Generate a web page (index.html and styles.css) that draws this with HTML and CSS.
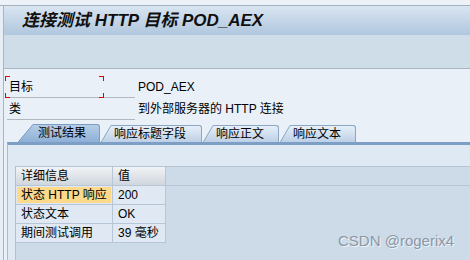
FILE: index.html
```html
<!DOCTYPE html>
<html lang="zh">
<head>
<meta charset="utf-8">
<title>连接测试 HTTP 目标 POD_AEX</title>
<link rel="stylesheet" href="styles.css">
</head>
<body>
<div class="screen">
  <div class="topstrip"></div>
  <div class="main">
    <div class="titlebar"><span class="cjk">连接测试</span> HTTP <span class="cjk">目标</span> POD_AEX</div>
    <div class="toolbar"></div>
    <div class="content">
      <div class="fields">
        <div class="field-row">
          <div class="field-label"><div class="focus">目标</div></div>
          <div class="field-value">POD_AEX</div>
        </div>
        <div class="field-row">
          <div class="field-label"><div class="plain">类</div></div>
          <div class="field-value">到外部服务器的 HTTP 连接</div>
        </div>
      </div>
      <div class="tabs">
        <div class="tab active">
          <svg class="slant" width="15" height="18" viewBox="0 0 15 18">
            <defs><linearGradient id="ga" x1="0" y1="0" x2="0" y2="1"><stop offset="0" stop-color="#b6cde7"/><stop offset="1" stop-color="#8eb0d7"/></linearGradient></defs>
            <polygon points="0,18 15,0 15,18" fill="url(#ga)"/>
            <line x1="0.3" y1="18" x2="15" y2="0.5" stroke="#7b9cc4" stroke-width="1"/>
          </svg>
          <div class="tab-body w1">测试结果</div>
        </div>
        <div class="tab">
          <svg class="slant" width="10" height="17" viewBox="0 0 10 17">
            <defs><linearGradient id="gi2" x1="0" y1="0" x2="0" y2="1"><stop offset="0" stop-color="#e7eff8"/><stop offset="1" stop-color="#bdd0e6"/></linearGradient></defs>
            <polygon points="0,17 10,0 10,17" fill="url(#gi2)"/>
            <line x1="0.3" y1="17" x2="10" y2="0.5" stroke="#8ca7c5" stroke-width="1"/>
          </svg>
          <div class="tab-body w2">响应标题字段</div>
        </div>
        <div class="tab">
          <svg class="slant" width="10" height="17" viewBox="0 0 10 17">
            <defs><linearGradient id="gi3" x1="0" y1="0" x2="0" y2="1"><stop offset="0" stop-color="#e7eff8"/><stop offset="1" stop-color="#bdd0e6"/></linearGradient></defs>
            <polygon points="0,17 10,0 10,17" fill="url(#gi3)"/>
            <line x1="0.3" y1="17" x2="10" y2="0.5" stroke="#8ca7c5" stroke-width="1"/>
          </svg>
          <div class="tab-body w3">响应正文</div>
        </div>
        <div class="tab">
          <svg class="slant" width="10" height="17" viewBox="0 0 10 17">
            <defs><linearGradient id="gi4" x1="0" y1="0" x2="0" y2="1"><stop offset="0" stop-color="#e7eff8"/><stop offset="1" stop-color="#bdd0e6"/></linearGradient></defs>
            <polygon points="0,17 10,0 10,17" fill="url(#gi4)"/>
            <line x1="0.3" y1="17" x2="10" y2="0.5" stroke="#8ca7c5" stroke-width="1"/>
          </svg>
          <div class="tab-body w4">响应文本</div>
        </div>
      </div>
      <div class="panel">
        <div class="panel-top"></div>
        <div class="grid-area">
          <div class="alv">
            <div class="cell head">详细信息</div>
            <div class="cell head">值</div>
            <div class="cell hl">状态 HTTP 响应</div>
            <div class="cell">200</div>
            <div class="cell">状态文本</div>
            <div class="cell">OK</div>
            <div class="cell">期间测试调用</div>
            <div class="cell">39 毫秒</div>
          </div>
        </div>
      </div>
    </div>
  </div>
  <div class="watermark">CSDN @rogerix4</div>
</div>
</body>
</html>
```

FILE: styles.css
```css
* { box-sizing: border-box; }

body {
  margin: 0;
  background: #e8eef6;
  font: 12px "Liberation Sans", "Noto Sans CJK SC", sans-serif;
  color: #000;
}

.screen {
  width: 470px;
  height: 260px;
  position: relative;
  overflow: hidden;
  display: flex;
  flex-direction: column;
}

.topstrip {
  height: 6px;
  background: #edf2f8;
  border-bottom: 1px solid #a3afbb;
}

.main {
  flex: 1;
  margin-left: 3px;
  border-left: 1px solid #a7b5c3;
  display: flex;
  flex-direction: column;
  min-height: 0;
}

.titlebar {
  height: 29px;
  background: linear-gradient(#d9e5f1, #b0c7de);
  padding-left: 18px;
  font-size: 17px;
  font-weight: bold;
  font-style: italic;
  line-height: 29px;
  white-space: nowrap;
  color: #101010;
}

.toolbar {
  height: 34px;
  background: #cfdde9;
  border-bottom: 1px solid #a9b7c5;
}

.content {
  flex: 1;
  background: #e9f0f7;
  padding-top: 7px;
  display: flex;
  flex-direction: column;
  min-height: 0;
}

.field-row {
  display: flex;
  height: 22px;
  line-height: 22px;
  white-space: nowrap;
}

.field-label {
  width: 130px;
  margin-left: 1px;
  background: linear-gradient(#b3b8be, #b3b8be) 2px 21px / 128px 1px no-repeat;
}

.focus, .plain {
  width: 99px;
  height: 22px;
  padding-left: 4px;
}

.focus {
  background:
    linear-gradient(#e00000, #e00000) 0 0 / 5px 1px no-repeat,
    linear-gradient(#e00000, #e00000) 0 0 / 1px 5px no-repeat,
    linear-gradient(#e00000, #e00000) 100% 0 / 5px 1px no-repeat,
    linear-gradient(#e00000, #e00000) 100% 0 / 1px 5px no-repeat,
    linear-gradient(#e00000, #e00000) 0 100% / 5px 1px no-repeat,
    linear-gradient(#e00000, #e00000) 0 100% / 1px 5px no-repeat,
    linear-gradient(#e00000, #e00000) 100% 100% / 5px 1px no-repeat,
    linear-gradient(#e00000, #e00000) 100% 100% / 1px 5px no-repeat;
}

.field-value {
  margin-left: 3px;
}

.tabs {
  display: flex;
  align-items: flex-end;
  gap: 1px;
  height: 18px;
  margin-top: 4px;
  padding-left: 14px;
}

.tab {
  display: flex;
  align-items: flex-end;
}

.slant { display: block; }

.tab-body {
  height: 17px;
  line-height: 16px;
  padding-left: 3px;
  border-top: 1px solid #8ca7c5;
  border-right: 1px solid #8ca7c5;
  border-top-right-radius: 3px;
  background: linear-gradient(#e7eff8, #bdd0e6);
  white-space: nowrap;
}

.tab.active .tab-body {
  height: 18px;
  line-height: 17px;
  padding-left: 5px;
  border-color: #7b9cc4;
  background: linear-gradient(#b6cde7, #8eb0d7);
}

.w1 { width: 67px; }
.w2 { width: 91px; }
.w3 { width: 66px; }
.w4 { width: 66px; }

.panel {
  flex: 1;
  margin-left: 3px;
  border-top: 3px solid #7d9ec6;
  border-left: 1px solid #a9bbcd;
  background: #dfe9f4;
  display: flex;
  flex-direction: column;
}

.panel-top { height: 21px; }

.grid-area {
  flex: 1;
  margin-left: 7px;
  border-top: 1px solid #b5c5d5;
  border-left: 1px solid #b0c0d0;
  background: linear-gradient(#cddbe9 0 18px, #b7c6d6 18px 19px, #cddbe9 19px);
}

.alv {
  display: grid;
  grid-template-columns: 97px 53px;
}

.cell {
  height: 19px;
  line-height: 18px;
  padding-left: 5px;
  border-right: 1px solid #b7c6d6;
  border-bottom: 1px solid #b7c6d6;
  background: #dfe8f3;
  white-space: nowrap;
}

.cell.head {
  background: linear-gradient(#f1f3f5, #cfd6de);
}

.cell.hl {
  background: #fcd98b;
  box-shadow: inset 0 0 0 1px #dfe8f3;
}

.watermark {
  position: absolute;
  left: 338px;
  top: 232px;
  font: 15px "Liberation Sans", sans-serif;
  color: #8c97a5;
  text-shadow: 1px 1px 0 #eef3f8;
}
```
